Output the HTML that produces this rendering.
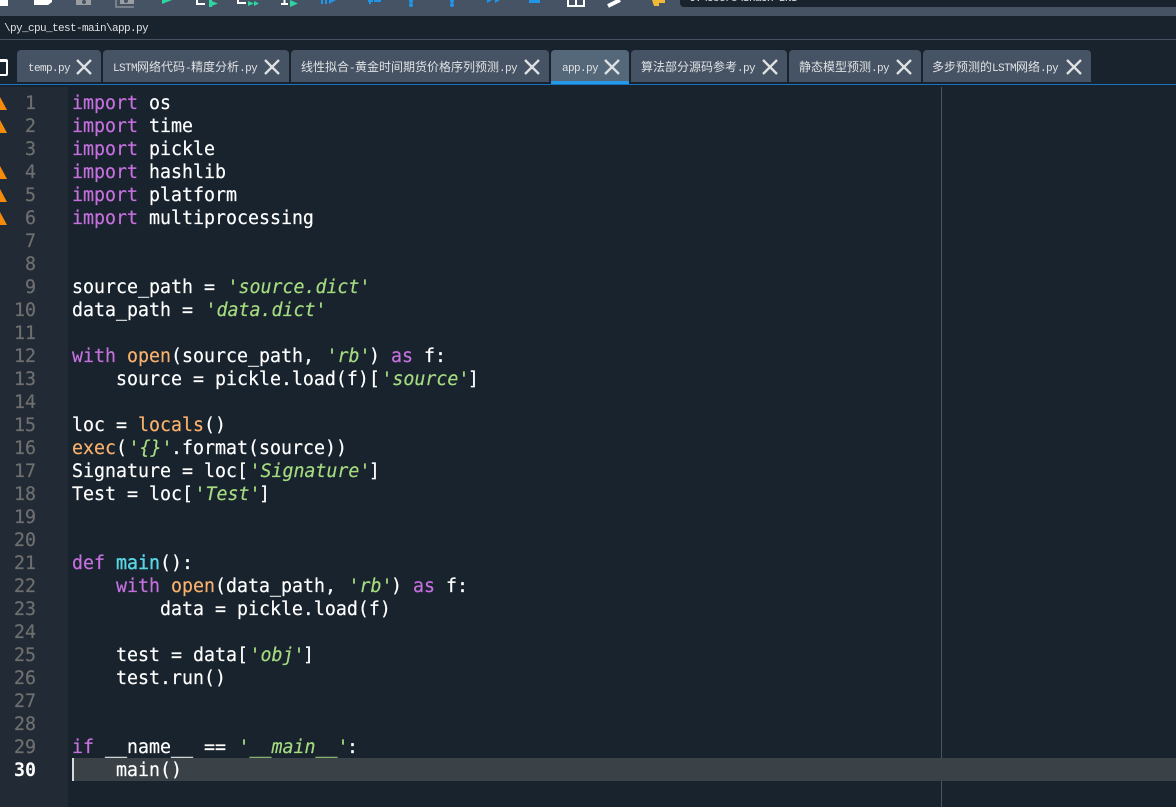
<!DOCTYPE html>
<html><head><meta charset="utf-8"><style>
html,body{margin:0;padding:0;width:1176px;height:807px;overflow:hidden;background:#19232d}
div{position:absolute}
.tab{top:50px;height:32px;background:#455364;border-radius:4px 4px 0 0;color:#e0e1e3;font:12px/34px "WenQuanYi Zen Hei","Noto Sans CJK SC",sans-serif;white-space:nowrap}
.tab span{position:absolute;top:0}
.tab i{font:11px/34px "Liberation Mono",monospace;letter-spacing:-.6px;font-style:normal}
.tab svg{position:absolute;top:9px;width:16px;height:16px}
.mono{font:11px/14px "Liberation Mono",monospace;letter-spacing:-.6px;white-space:pre;color:#e0e1e3}
.ln{left:0;width:36px;text-align:right;color:#6f6f6f;font:18.27px/23px "DejaVu Sans Mono",monospace;height:23px;-webkit-text-stroke:.2px #6f6f6f}
.c{left:72px;color:#fff;font:18.27px/23px "DejaVu Sans Mono",monospace;white-space:pre;height:23px;-webkit-text-stroke:.2px}
.k{color:#c670e0}.b{color:#fab16c}.s{color:#a5dc80;font-style:italic;position:relative;left:1.5px}.d{color:#57d6e4;-webkit-text-stroke:.4px}
.w{left:-7px;width:0;height:0;border-left:7px solid transparent;border-right:7px solid transparent;border-bottom:13px solid #f58a0b}
</style></head><body>
<div style="left:0;top:0;width:1176px;height:16px;background:#455364"></div>
<svg style="position:absolute;left:0;top:0" width="720" height="16">
<rect x="0" y="0" width="8" height="6" fill="#fff"/>
<path d="M34 0H52V2L48 5H34Z" fill="#fff"/>
<path d="M76 0H91V5H76Z" fill="#9a9da2"/><circle cx="84" cy="2" r="2" fill="#455364"/>
<path d="M120 0V4H134V0Z" fill="#9a9da2"/><path d="M116 0V7H134" fill="none" stroke="#8b8f95" stroke-width="1.5"/><circle cx="126" cy="1" r="2" fill="#455364"/>
<path d="M162 0H172L162 4Z" fill="#2fd5a0"/>
<path d="M197 0V4H205" fill="none" stroke="#fff" stroke-width="2"/><path d="M209 0L218 3.5 209 7Z" fill="#2fd5a0"/><path d="M209 0H212V7H209Z" fill="#2fd5a0"/>
<path d="M238 0V3H246" fill="none" stroke="#fff" stroke-width="2"/><path d="M248 1L254 3.5 248 6ZM254 1L259 3.5 254 6Z" fill="#2fd5a0"/>
<path d="M281 4H288M284.500 0V4" fill="none" stroke="#fff" stroke-width="2"/><path d="M290 0L298 3.500 290 7Z" fill="#2fd5a0"/>
<path d="M321 0H323V4H321ZM325 0H327V4H325ZM329 0H336L329 4Z" fill="#2196e8"/>
<path d="M368 1H373M370 0V4M374 1H381" fill="none" stroke="#2196e8" stroke-width="2"/>
<circle cx="411" cy="1" r="2" fill="#2196e8"/><circle cx="411" cy="5" r="2" fill="#2196e8"/>
<circle cx="452" cy="1" r="2" fill="#2196e8"/><circle cx="452" cy="5" r="2" fill="#2196e8"/>
<path d="M487 0H492L487 3ZM495 0H500L495 3Z" fill="#2196e8"/>
<rect x="529" y="0" width="11" height="3" fill="#2196e8"/>
<path d="M568 0V6H584V0" fill="none" stroke="#fff" stroke-width="2"/><rect x="575" y="0" width="2" height="5" fill="#fff"/>
<path d="M608 6L620 0" stroke="#fff" stroke-width="4" fill="none"/>
<path d="M652 0H665V3H659V6H654Z" fill="#f0b93a"/>
</svg>
<div style="left:680px;top:0;width:496px;height:7px;background:#19232d;border-radius:0 0 0 4px"></div>
<div class="mono" style="left:689px;top:-8px">C:\Users\ShaoH BNS</div>
<div class="mono" style="left:4px;top:22px">\py_cpu_test-main\app.py</div>
<div style="left:0;top:39px;width:1176px;height:1px;background:#455364"></div>
<div style="left:-4px;top:59px;width:8px;height:12px;border:2px solid #fff;border-top-width:3px;border-radius:2px"></div>

<div class="tab" style="left:17px;width:84px"><span style="left:11px"><i>temp.py</i></span><svg style="left:59px" viewBox="0 0 16 16"><path d="M1 1L15 15M15 1L1 15" stroke="#dfe1e3" stroke-width="2.3"/></svg></div>
<div class="tab" style="left:103px;width:186px"><span style="left:10px"><i>LSTM</i>网络代码<i>-</i>精度分析<i>.py</i></span><svg style="left:161px" viewBox="0 0 16 16"><path d="M1 1L15 15M15 1L1 15" stroke="#dfe1e3" stroke-width="2.3"/></svg></div>
<div class="tab" style="left:291px;width:258px"><span style="left:10px">线性拟合<i>-</i>黄金时间期货价格序列预测<i>.py</i></span><svg style="left:233px" viewBox="0 0 16 16"><path d="M1 1L15 15M15 1L1 15" stroke="#dfe1e3" stroke-width="2.3"/></svg></div>
<div class="tab" style="left:551px;width:78px;height:33px;background:#54687a"><span style="left:11px"><i>app.py</i></span><svg style="left:53px" viewBox="0 0 16 16"><path d="M1 1L15 15M15 1L1 15" stroke="#dfe1e3" stroke-width="2.3"/></svg><div style="left:0;top:31px;width:78px;height:3px;background:#259ae9"></div></div>
<div class="tab" style="left:631px;width:156px"><span style="left:10px">算法部分源码参考<i>.py</i></span><svg style="left:131px" viewBox="0 0 16 16"><path d="M1 1L15 15M15 1L1 15" stroke="#dfe1e3" stroke-width="2.3"/></svg></div>
<div class="tab" style="left:789px;width:132px"><span style="left:10px">静态模型预测<i>.py</i></span><svg style="left:107px" viewBox="0 0 16 16"><path d="M1 1L15 15M15 1L1 15" stroke="#dfe1e3" stroke-width="2.3"/></svg></div>
<div class="tab" style="left:923px;width:168px"><span style="left:9px">多步预测的<i>LSTM</i>网络<i>.py</i></span><svg style="left:143px" viewBox="0 0 16 16"><path d="M1 1L15 15M15 1L1 15" stroke="#dfe1e3" stroke-width="2.3"/></svg></div>
<div style="left:0;top:84px;width:1176px;height:1px;background:#1a72bb"></div>

<div style="left:0;top:87px;width:68px;height:720px;background:#222b35"></div>
<div style="left:941px;top:87px;width:1px;height:720px;background:#4a5560"></div>
<div style="left:72px;top:758px;width:1104px;height:23px;background:#3a4248"></div>
<div style="left:72px;top:758px;width:2px;height:23px;background:#d8d8d8"></div>

<div class="w" style="top:97px"></div><div class="w" style="top:120px"></div><div class="w" style="top:166px"></div><div class="w" style="top:189px"></div><div class="w" style="top:212px"></div>

<div class="ln" style="top:92px">1</div><div class="ln" style="top:115px">2</div><div class="ln" style="top:138px">3</div><div class="ln" style="top:161px">4</div><div class="ln" style="top:184px">5</div><div class="ln" style="top:207px">6</div><div class="ln" style="top:230px">7</div><div class="ln" style="top:253px">8</div><div class="ln" style="top:276px">9</div><div class="ln" style="top:299px">10</div><div class="ln" style="top:322px">11</div><div class="ln" style="top:345px">12</div><div class="ln" style="top:368px">13</div><div class="ln" style="top:391px">14</div><div class="ln" style="top:414px">15</div><div class="ln" style="top:437px">16</div><div class="ln" style="top:460px">17</div><div class="ln" style="top:483px">18</div><div class="ln" style="top:506px">19</div><div class="ln" style="top:529px">20</div><div class="ln" style="top:552px">21</div><div class="ln" style="top:575px">22</div><div class="ln" style="top:598px">23</div><div class="ln" style="top:621px">24</div><div class="ln" style="top:644px">25</div><div class="ln" style="top:667px">26</div><div class="ln" style="top:690px">27</div><div class="ln" style="top:713px">28</div><div class="ln" style="top:736px">29</div><div class="ln" style="top:759px;color:#fff;-webkit-text-stroke:0;font-weight:bold">30</div>

<div class="c" style="top:92px"><span class="k">import</span> os</div>
<div class="c" style="top:115px"><span class="k">import</span> time</div>
<div class="c" style="top:138px"><span class="k">import</span> pickle</div>
<div class="c" style="top:161px"><span class="k">import</span> hashlib</div>
<div class="c" style="top:184px"><span class="k">import</span> platform</div>
<div class="c" style="top:207px"><span class="k">import</span> multiprocessing</div>
<div class="c" style="top:276px">source_path = <span class="s">'source.dict'</span></div>
<div class="c" style="top:299px">data_path = <span class="s">'data.dict'</span></div>
<div class="c" style="top:345px"><span class="k">with</span> <span class="b">open</span>(source_path, <span class="s">'rb'</span>) <span class="k">as</span> f:</div>
<div class="c" style="top:368px">    source = pickle.load(f)[<span class="s">'source'</span>]</div>
<div class="c" style="top:414px">loc = <span class="b">locals</span>()</div>
<div class="c" style="top:437px"><span class="b">exec</span>(<span class="s">'{}'</span>.format(source))</div>
<div class="c" style="top:460px">Signature = loc[<span class="s">'Signature'</span>]</div>
<div class="c" style="top:483px">Test = loc[<span class="s">'Test'</span>]</div>
<div class="c" style="top:552px"><span class="k">def</span> <span class="d">main</span>():</div>
<div class="c" style="top:575px">    <span class="k">with</span> <span class="b">open</span>(data_path, <span class="s">'rb'</span>) <span class="k">as</span> f:</div>
<div class="c" style="top:598px">        data = pickle.load(f)</div>
<div class="c" style="top:644px">    test = data[<span class="s">'obj'</span>]</div>
<div class="c" style="top:667px">    test.run()</div>
<div class="c" style="top:736px"><span class="k">if</span> __name__ == <span class="s">'__main__'</span>:</div>
<div class="c" style="top:759px">    main()</div>
</body></html>
